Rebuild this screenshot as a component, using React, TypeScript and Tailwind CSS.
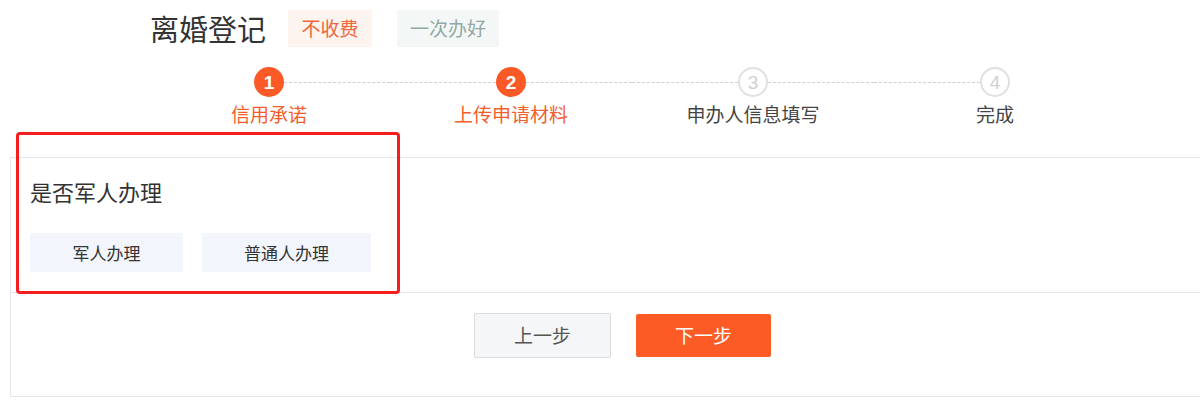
import React from 'react'

const font = { fontFamily: '"Noto Sans CJK SC", "Liberation Sans", sans-serif' }

const steps = [
  { n: 1, label: '信用承诺', done: true },
  { n: 2, label: '上传申请材料', done: true },
  { n: 3, label: '申办人信息填写', done: false },
  { n: 4, label: '完成', done: false },
]

function Steps() {
  return (
    <div className="flex ml-[148px] mt-[20px]">
      {steps.map((s, i) => (
        <div key={s.n} className="w-[242px] flex flex-col items-center">
          <div className="w-full flex items-center h-[30px]">
            <div className={`flex-1 ${i > 0 ? 'border-t border-dashed border-[#cfcfcf]' : ''}`} />
            {s.done ? (
              <div className="w-[30px] h-[30px] rounded-full bg-[#fb5a26] text-white flex items-center justify-center text-[19px] font-bold leading-none" style={{ fontFamily: '"Liberation Sans", sans-serif' }}>
                {s.n}
              </div>
            ) : (
              <div className="w-[30px] h-[30px] rounded-full border-2 border-[#e0e0e0] text-[#cfcfcf] flex items-center justify-center text-[19px] leading-none" style={{ fontFamily: '"Liberation Sans", sans-serif' }}>
                {s.n}
              </div>
            )}
            <div className={`flex-1 ${i < steps.length - 1 ? 'border-t border-dashed border-[#cfcfcf]' : ''}`} />
          </div>
          <div className={`mt-[4px] text-[19px] leading-[26px] ${s.done ? 'text-[#f25d2c]' : 'text-[#444]'}`}>{s.label}</div>
        </div>
      ))}
    </div>
  )
}

export default function App() {
  return (
    <div className="relative w-[1200px] h-[402px] bg-white overflow-hidden" style={font}>
      {/* Header */}
      <div className="h-[157px]">
        <div className="flex items-center pt-[10px] pl-[150px]">
          <h1 className="text-[29px] leading-[37px] text-[#333]">离婚登记</h1>
          <span className="ml-[22px] h-[37px] w-[84px] flex items-center justify-center bg-[#fdf4f0] text-[#f0663a] text-[19px]">不收费</span>
          <span className="ml-[25px] h-[37px] w-[102px] flex items-center justify-center bg-[#f3f7f6] text-[#93a8a3] text-[19px]">一次办好</span>
        </div>
        <Steps />
      </div>

      {/* Panel */}
      <div className="ml-[10px] w-[1200px] border border-[#e3e6ef]">
        <div className="h-[135px] pl-[19px] pt-[18px] border-b border-[#e3e6ef]">
          <div className="text-[22px] leading-[30px] text-[#333]">是否军人办理</div>
          <div className="flex gap-[19px] mt-[27px]">
            <button className="w-[153px] h-[39px] bg-[#f2f5fb] rounded-[2px] text-[17px] text-[#333]">军人办理</button>
            <button className="w-[169px] h-[39px] bg-[#f2f5fb] rounded-[2px] text-[17px] text-[#333]">普通人办理</button>
          </div>
        </div>
        <div className="h-[103px] flex items-start pt-[20px] pl-[463px] gap-[25px]">
          <button className="w-[137px] h-[45px] border border-[#dcdcdc] bg-[#f5f6f8] rounded-[2px] text-[19px] text-[#555]">上一步</button>
          <button className="mt-[1px] w-[135px] h-[43px] bg-[#fd5b25] rounded-[2px] text-[19px] text-white">下一步</button>
        </div>
      </div>

      {/* Annotation box */}
      <div className="absolute left-[16px] top-[132px] w-[384px] h-[162px] border-[3px] border-[#f51d1d] rounded-[4px] pointer-events-none" />
    </div>
  )
}
